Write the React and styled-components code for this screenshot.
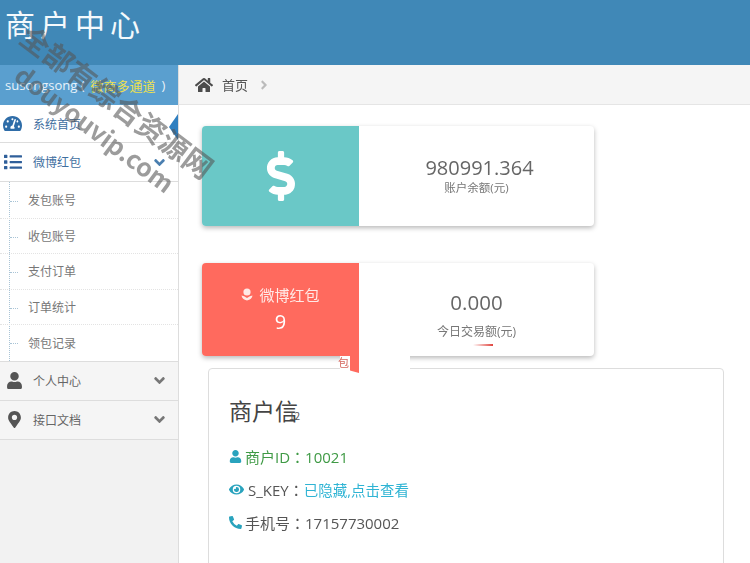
import React from "react";
import styled, { createGlobalStyle } from "styled-components";
import { FaHome, FaTachometerAlt, FaList, FaUser, FaMapMarkerAlt, FaDollarSign, FaEye, FaPhoneAlt, FaAngleDown, FaAngleRight } from "react-icons/fa";

const Global = createGlobalStyle`
  html, body { margin: 0; padding: 0; }
  body { font-family: "Open Sans", "Noto Sans CJK SC", sans-serif; background: #fff; color: #555; }
  * { box-sizing: border-box; }
`;
const Page = styled.div`
  position: relative; width: 750px; height: 563px; overflow: hidden;
  display: flex; flex-direction: column; filter: blur(0.35px);
`;
const Header = styled.header`
  height: 65px; flex: none; background: #4088b7; color: #f4f9fc; padding: 0 0 0 5px;
  font: 400 30px/46px "Noto Sans CJK SC", sans-serif; letter-spacing: 5px;
`;
const Body = styled.div`display: flex; flex: 1; min-height: 0;`;
const Side = styled.aside`
  width: 179px; flex: none; background: #f2f2f2; border-right: 1px solid #ddd;
  position: relative;
`;
const UserBar = styled.div`
  height: 40px; background: #5a9fcf; color: #e8f2f9; font-size: 13px;
  display: flex; align-items: center; padding-left: 5px; white-space: nowrap;
`;
const Gold = styled.span`color: #ece04f; margin: 0 6px; font-size: 13px;`;
const MenuHead = styled.div`
  height: ${p => p.$h || 39}px; display: flex; align-items: center;
  background: ${p => p.$white ? "#fff" : "#f5f5f5"};
  border-bottom: 1px solid #ddd;
  color: ${p => p.$active ? "#3f6f9f" : "#666"}; font-size: 12px;
`;
const MenuIcon = styled.span`
  width: 33px; padding-left: ${p => p.$pad || 4}px; display: flex; flex: none; font-size: ${p => p.$s || 17}px;
  color: ${p => p.$c || "#555"};
`;
const MenuLabel = styled.span`flex: 1;`;
const Chevron = styled.span`
  width: 27px; flex: none; display: flex; font-size: 17px;
  color: ${p => p.$c || "#777"};
`;
const Notch = styled.span`
  position: absolute; right: 0; top: 49px; width: 0; height: 0;
  border-style: solid; border-width: 13px 9px 13px 0;
  border-color: transparent #2f7fc0 transparent transparent;
`;
const SubList = styled.div`
  position: relative; background: #fff; border-bottom: 1px solid #ddd; padding-top: 1px;
  &::before { content: ""; position: absolute; left: 9px; top: 0; bottom: 0; border-left: 1px dotted #a9c4d6; }
`;
const SubItem = styled.div`
  height: 35.5px; display: flex; align-items: center; padding-left: 28px;
  font-size: 12px; color: #777; position: relative;
  border-bottom: 1px dotted #e3e3e3;
  &:last-child { border-bottom: none; }
  &::before { content: ""; position: absolute; left: 10px; top: 18px; width: 8px; border-top: 1px dotted #a9c4d6; }
`;
const Main = styled.main`flex: 1; min-width: 0; position: relative;`;
const Crumbs = styled.div`
  height: 40px; background: #f5f5f5; border-bottom: 1px solid #e5e5e5;
  display: flex; align-items: center; padding-left: 16px; gap: 9px;
  font-size: 13px; color: #555;
`;
const HomeIcon = styled.span`display: flex; font-size: 18px; color: #4c4c4c;`;
const Sep = styled.span`display: flex; color: #bbb; font-size: 14px;`;
const Content = styled.div`padding: 21px 0 0 23px;`;
const Card = styled.section`
  width: 392px; height: ${p => p.$h}px; margin-bottom: ${p => p.$mb}px;
  display: flex; border-radius: 4px; background: #fff; position: relative; z-index: 2;
  box-shadow: 0 2px 5px rgba(0,0,0,.28);
`;
const CardSide = styled.div`
  width: 157px; flex: none; border-radius: 4px 0 0 4px; background: ${p => p.$bg};
  color: #fff; display: flex; flex-direction: column; align-items: center; justify-content: center;
  position: relative;
`;
const Smudge = styled.span`
  position: absolute; left: 138px; top: 100%; width: 70px; height: 14px; background: #fff;
`;
const Tail = styled.span`
  position: absolute; right: 0; top: 100%; width: 9px; height: 17px; background: #ff6a5e;
  clip-path: polygon(0 0, 100% 0, 100% 100%, 0 85%);
`;
const Fragment = styled.span`
  position: absolute; left: 136px; top: 100%; font-size: 11px; line-height: 13px; color: #d5675e;
`;
const Sliver = styled.span`
  position: absolute; left: 271px; bottom: 10px; width: 20px; height: 2px;
  background: linear-gradient(90deg, transparent, #e0443e);
`;
const CardBody = styled.div`
  flex: 1; display: flex; flex-direction: column; align-items: center; justify-content: center; color: #666;
`;
const Amount = styled.div`font-size: ${p => p.$s || 20}px; line-height: 22px; margin: ${p => p.$mt || 0}px 0 0 ${p => p.$ml || 0}px;`;
const AmountLabel = styled.div`font-size: ${p => p.$s || 11.5}px; line-height: 14px; color: #777; margin-top: ${p => p.$mt || 2}px;`;
const Tag = styled.div`font-size: 15px; line-height: 22px; display: flex; align-items: center; gap: 6px; color: #ffe9e6;`;
const Count = styled.div`font-size: 20px; line-height: 28px; margin-top: 2px;`;
const Panel = styled.section`
  width: 516px; height: 230px; margin-left: 6px; background: #fff;
  border: 1px solid #ddd; border-radius: 4px; padding: 26px 20px; position: relative; z-index: 1;
`;
const PanelTitle = styled.h3`margin: 0 0 9px; font-size: 23px; line-height: 30px; font-weight: 400; color: #444; font-family: "Noto Sans CJK SC", sans-serif;`;
const Glitch = styled.span`font-size: 10px; margin-left: -9px; color: #555;`;
const InfoRow = styled.div`
  display: flex; align-items: center; height: 33px; font-size: 15px; color: ${p => p.$c || "#555"};
  font-family: "Open Sans", "Noto Sans CJK TC", sans-serif;
`;
const InfoIcon = styled.span`display: flex; flex: none; font-size: ${p => p.$s || 13}px; color: #29a3bd; width: ${p => p.$w || 16}px;`;
const Link = styled.span`color: #2fb4d4; font-size: 14.5px;`;
const Mark = styled.div`
  position: absolute; left: ${p => p.$x}px; top: ${p => p.$y}px;
  transform: rotate(37deg); transform-origin: left top; white-space: nowrap; pointer-events: none;
  color: rgba(85,85,85,.58); font-weight: 700; font-size: ${p => p.$s}px;
  font-family: "Noto Sans CJK SC", "Open Sans", sans-serif; z-index: 5;
`;

const RibbonIcon = () => (
  <svg width="12" height="13" viewBox="0 0 12 13" fill="currentColor">
    <circle cx="6" cy="4" r="3.6" />
    <path d="M0.5 7.5 Q3 7.8 6 10 Q9 7.8 11.5 7.5 Q11 11.5 6 12.6 Q1 11.5 0.5 7.5Z" />
  </svg>
);

const subs = ["发包账号", "收包账号", "支付订单", "订单统计", "领包记录"];

export default function App() {
  return (
    <Page>
      <Global />
      <Header>商户中心</Header>
      <Body>
        <Side>
          <UserBar>susongsong (<Gold>微商多通道</Gold>)</UserBar>
          <MenuHead $white $active $h={38}>
            <MenuIcon $c="#2f6da8" $s={19} $pad={3}><FaTachometerAlt /></MenuIcon>
            <MenuLabel>系统首页</MenuLabel>
          </MenuHead>
          <Notch />
          <MenuHead $white $active $h={39}>
            <MenuIcon $c="#2f5f9a" $s={18}><FaList /></MenuIcon>
            <MenuLabel>微博红包</MenuLabel>
            <Chevron $c="#4a7fb0"><FaAngleDown /></Chevron>
          </MenuHead>
          <SubList>
            {subs.map(s => <SubItem key={s}>{s}</SubItem>)}
          </SubList>
          <MenuHead>
            <MenuIcon $pad={6}><FaUser /></MenuIcon>
            <MenuLabel>个人中心</MenuLabel>
            <Chevron><FaAngleDown /></Chevron>
          </MenuHead>
          <MenuHead>
            <MenuIcon $pad={6}><FaMapMarkerAlt /></MenuIcon>
            <MenuLabel>接口文档</MenuLabel>
            <Chevron><FaAngleDown /></Chevron>
          </MenuHead>
        </Side>
        <Main>
          <Crumbs>
            <HomeIcon><FaHome /></HomeIcon>
            <span>首页</span>
            <Sep><FaAngleRight /></Sep>
          </Crumbs>
          <Content>
            <Card $h={100} $mb={37}>
              <CardSide $bg="#6ac8c7"><FaDollarSign size={50} /></CardSide>
              <CardBody>
                <Amount $ml={6}>980991.364</Amount>
                <AmountLabel>账户余额(元)</AmountLabel>
              </CardBody>
            </Card>
            <Card $h={93} $mb={12}>
              <CardSide $bg="#ff6a5e">
                <Smudge />
                <Fragment>包</Fragment>
                <Tail />
                <Tag><RibbonIcon />微博红包</Tag>
                <Count>9</Count>
              </CardSide>
              <CardBody>
                <Amount $mt={10} $s={20.5}>0.000</Amount>
                <AmountLabel $mt={12} $s={12}>今日交易额(元)</AmountLabel>
              </CardBody>
              <Sliver />
            </Card>
            <Panel>
              <PanelTitle>商户信<Glitch>12</Glitch></PanelTitle>
              <InfoRow $c="#3f9a45"><InfoIcon><FaUser /></InfoIcon>商户ID：10021</InfoRow>
              <InfoRow><InfoIcon $s={15} $w={19}><FaEye /></InfoIcon>S_KEY：<Link>已隐藏,点击查看</Link></InfoRow>
              <InfoRow><InfoIcon><FaPhoneAlt /></InfoIcon>手机号：17157730002</InfoRow>
            </Panel>
          </Content>
        </Main>
      </Body>
      <Mark $x={38} $y={14} $s={29}>全部有综合资源网</Mark>
      <Mark $x={30} $y={56} $s={25}>douyouvip.com</Mark>
    </Page>
  );
}
